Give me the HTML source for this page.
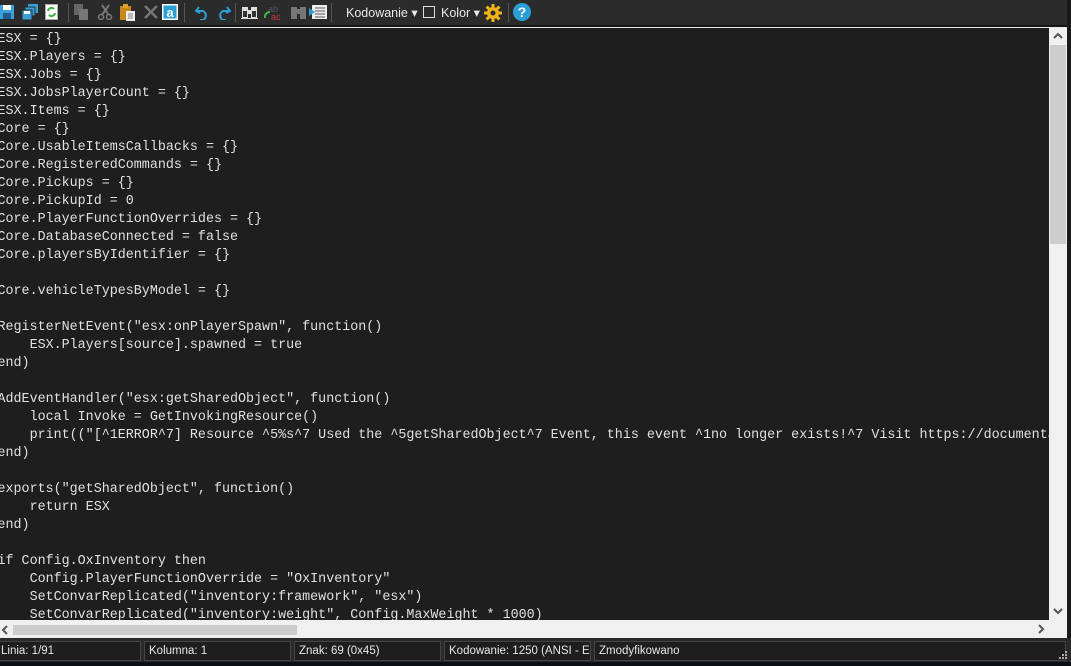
<!DOCTYPE html>
<html><head><meta charset="utf-8"><style>
*{margin:0;padding:0;box-sizing:border-box}
body{width:1071px;height:666px;background:#0b0f14;overflow:hidden;position:relative;font-family:"Liberation Sans",sans-serif}
#tb{position:absolute;left:0;top:0;width:1071px;height:25px;background:#2b2b2b}
#wl{position:absolute;left:0;top:25px;width:1067px;height:3px;background:#1a1a1a;border-top:1px solid #111;border-bottom:1px solid #e8e8e8}
.ic{position:absolute;top:4px}
.sep{position:absolute;top:3px;width:1px;height:19px;background:#555}
.tt{position:absolute;top:5px;color:#e8e8e8;font-size:12.5px}
#ed{position:absolute;left:0;top:28px;width:1049px;height:592px;background:#1e1e1e;overflow:hidden}
#code{position:absolute;left:-2.5px;top:3px;font-family:"Liberation Mono",monospace;font-size:13.37px;line-height:18px;color:#e0e0e0;white-space:pre}
#vs{position:absolute;left:1049px;top:28px;width:18px;height:592px;background:#f0f0f0}
#vt{position:absolute;left:1050px;top:45px;width:16px;height:199px;background:#cdcdcd}
#hs{position:absolute;left:0;top:620px;width:1067px;height:18px;background:#f0f0f0}
#ht{position:absolute;left:13px;top:625px;width:284px;height:10px;background:#cdcdcd}
#rb{position:absolute;left:1067px;top:0;width:4px;height:640px;background:#1a1a1a}
#sb{position:absolute;left:0;top:638px;width:1071px;height:24px;background:#2a2a2a}
.c{position:absolute;top:641px;height:20px;background:#1e1e1e;border:1px solid #444;color:#e6e6e6;font-size:11.5px;line-height:18px;padding-left:4px;white-space:nowrap;overflow:hidden}
</style></head><body>
<div id="tb">
<svg class="ic" style="left:0" width="15" height="16"><rect x="0" y="1" width="14" height="14" fill="#3aa0d8"/><rect x="3" y="1" width="8" height="5" fill="#fff"/><rect x="3" y="9" width="8" height="6" fill="#1e5c8a"/></svg>
<svg class="ic" style="left:22px" width="17" height="16"><rect x="6" y="0" width="10" height="9" fill="#3aa0d8"/><rect x="3" y="3" width="10" height="9" fill="#3aa0d8" stroke="#2b2b2b"/><rect x="0" y="6" width="10" height="10" fill="#3aa0d8" stroke="#2b2b2b"/><rect x="2" y="7" width="6" height="3" fill="#fff"/></svg>
<svg class="ic" style="left:45px" width="13" height="16"><rect x="0.5" y="0.5" width="12" height="15" fill="#fff" stroke="#aaa"/><path d="M3 7a3.5 3.5 0 0 1 6-2M10 9a3.5 3.5 0 0 1-6 2" stroke="#3cb34a" stroke-width="2" fill="none"/></svg>
<div class="sep" style="left:68px"></div>
<svg class="ic" style="left:74px" width="15" height="16"><rect x="0" y="0" width="9" height="11" fill="#666"/><rect x="5" y="5" width="9" height="11" fill="#777"/></svg>
<svg class="ic" style="left:97px" width="16" height="16"><path d="M12 1L5 11M5 1l6 9" stroke="#777" stroke-width="2"/><circle cx="4" cy="13" r="2.5" stroke="#777" stroke-width="1.5" fill="none"/><circle cx="12" cy="13" r="2.5" stroke="#777" stroke-width="1.5" fill="none"/></svg>
<svg class="ic" style="left:120px" width="16" height="17"><rect x="0" y="2" width="11" height="14" fill="#c8871a"/><rect x="3" y="0" width="5" height="4" fill="#e0a030"/><rect x="6" y="7" width="9" height="10" fill="#eee"/><path d="M8 10h5M8 12h5M8 14h5" stroke="#888"/></svg>
<svg class="ic" style="left:144px" width="14" height="16"><path d="M1 2l12 12M13 2L1 14" stroke="#777" stroke-width="2.5"/></svg>
<svg class="ic" style="left:162px" width="16" height="16"><rect x="0" y="0" width="16" height="16" fill="#fff"/><rect x="1.5" y="1.5" width="13" height="13" fill="#2a9fd6"/><text x="8" y="13" font-size="13" font-weight="bold" fill="#fff" text-anchor="middle" font-family="Liberation Sans">a</text></svg>
<div class="sep" style="left:184px"></div>
<svg class="ic" style="left:195px" width="15" height="16"><path d="M4 3L1 7l4 2M2 7h6a5 5 0 0 1 0 9H5" stroke="#2a9fd6" stroke-width="2" fill="none"/></svg>
<svg class="ic" style="left:216px" width="15" height="16"><path d="M11 3l3 4-4 2M13 7H7a5 5 0 0 0 0 9h3" stroke="#2a9fd6" stroke-width="2" fill="none"/></svg>
<div class="sep" style="left:235px"></div>
<svg class="ic" style="left:241px" width="17" height="16"><rect x="1" y="3" width="6" height="11" fill="#ddd"/><rect x="10" y="3" width="6" height="11" fill="#ddd"/><rect x="6" y="6" width="5" height="4" fill="#ddd"/><rect x="2" y="7" width="4" height="6" fill="#333"/><rect x="11" y="7" width="4" height="6" fill="#333"/><rect x="0" y="14" width="17" height="1" fill="#ddd"/></svg>
<svg class="ic" style="left:264px" width="19" height="17"><text x="4" y="8" font-size="9" fill="#555" font-family="Liberation Sans">ab</text><text x="7" y="16" font-size="9" fill="#c33" font-family="Liberation Sans">ac</text><path d="M1 14a5 5 0 0 1 5-6" stroke="#3cb34a" stroke-width="2" fill="none"/></svg>
<svg class="ic" style="left:290px" width="17" height="16"><rect x="1" y="3" width="6" height="12" fill="#777"/><rect x="10" y="3" width="6" height="12" fill="#777"/><rect x="6" y="5" width="5" height="5" fill="#777"/></svg>
<svg class="ic" style="left:309px" width="19" height="16"><rect x="3" y="1" width="15" height="14" fill="#eee"/><path d="M6 4h10M6 7h10M6 10h10M6 13h10" stroke="#555"/><path d="M0 4l6 4-6 4z" fill="#2a9fd6"/></svg>
<div class="sep" style="left:331px"></div>
<div class="tt" style="left:346px">Kodowanie ▾</div>
<div style="position:absolute;left:423px;top:6px;width:12px;height:12px;border:1px solid #ddd"></div>
<div class="tt" style="left:441px">Kolor ▾</div>
<svg class="ic" style="left:484px" width="18" height="18"><circle cx="9" cy="9" r="6" fill="#f0b418"/><g stroke="#f0b418" stroke-width="3"><path d="M9 0v18M0 9h18M2.6 2.6l12.8 12.8M15.4 2.6L2.6 15.4"/></g><circle cx="9" cy="9" r="2.5" fill="#2b2b2b"/></svg>
<div class="sep" style="left:508px"></div>
<svg class="ic" style="left:513px;top:3px" width="18" height="18"><circle cx="9" cy="9" r="9" fill="#2a9fd6"/><text x="9" y="14" font-size="14" font-weight="bold" fill="#fff" text-anchor="middle" font-family="Liberation Sans">?</text></svg>
</div>
<div id="wl"></div>
<div id="ed"><div id="code">ESX = {}
ESX.Players = {}
ESX.Jobs = {}
ESX.JobsPlayerCount = {}
ESX.Items = {}
Core = {}
Core.UsableItemsCallbacks = {}
Core.RegisteredCommands = {}
Core.Pickups = {}
Core.PickupId = 0
Core.PlayerFunctionOverrides = {}
Core.DatabaseConnected = false
Core.playersByIdentifier = {}

Core.vehicleTypesByModel = {}

RegisterNetEvent("esx:onPlayerSpawn", function()
    ESX.Players[source].spawned = true
end)

AddEventHandler("esx:getSharedObject", function()
    local Invoke = GetInvokingResource()
    print(("[^1ERROR^7] Resource ^5%s^7 Used the ^5getSharedObject^7 Event, this event ^1no longer exists!^7 Visit https://documentation.esx-framework.org
end)

exports("getSharedObject", function()
    return ESX
end)

if Config.OxInventory then
    Config.PlayerFunctionOverride = "OxInventory"
    SetConvarReplicated("inventory:framework", "esx")
    SetConvarReplicated("inventory:weight", Config.MaxWeight * 1000)
end</div></div>
<div id="vs"></div><div id="vt"></div>
<svg style="position:absolute;left:1052px;top:32px" width="12" height="8"><path d="M2 6l4-4 4 4" stroke="#555" stroke-width="2" fill="none"/></svg>
<svg style="position:absolute;left:1052px;top:607px" width="12" height="8"><path d="M2 2l4 4 4-4" stroke="#555" stroke-width="2" fill="none"/></svg>
<div id="hs"></div><div id="ht"></div>
<svg style="position:absolute;left:1px;top:624px" width="8" height="12"><path d="M6 2L2 6l4 4" stroke="#555" stroke-width="2" fill="none"/></svg>
<svg style="position:absolute;left:1037px;top:623px" width="8" height="12"><path d="M2 2l4 4-4 4" stroke="#555" stroke-width="2" fill="none"/></svg>
<div id="rb"></div>
<div id="sb"></div>
<div class="c" style="left:-4px;width:145px">Linia: 1/91</div>
<div class="c" style="left:144px;width:147px">Kolumna: 1</div>
<div class="c" style="left:294px;width:147px">Znak: 69 (0x45)</div>
<div class="c" style="left:444px;width:147px">Kodowanie: 1250  (ANSI - Europa Środkowa)</div>
<div class="c" style="left:594px;width:472px">Zmodyfikowano</div>
<svg style="position:absolute;left:1058px;top:650px" width="10" height="10"><g fill="#aaa"><rect x="7" y="1" width="2" height="2"/><rect x="4" y="4" width="2" height="2"/><rect x="7" y="4" width="2" height="2"/><rect x="1" y="7" width="2" height="2"/><rect x="4" y="7" width="2" height="2"/><rect x="7" y="7" width="2" height="2"/></g></svg>
</body></html>
